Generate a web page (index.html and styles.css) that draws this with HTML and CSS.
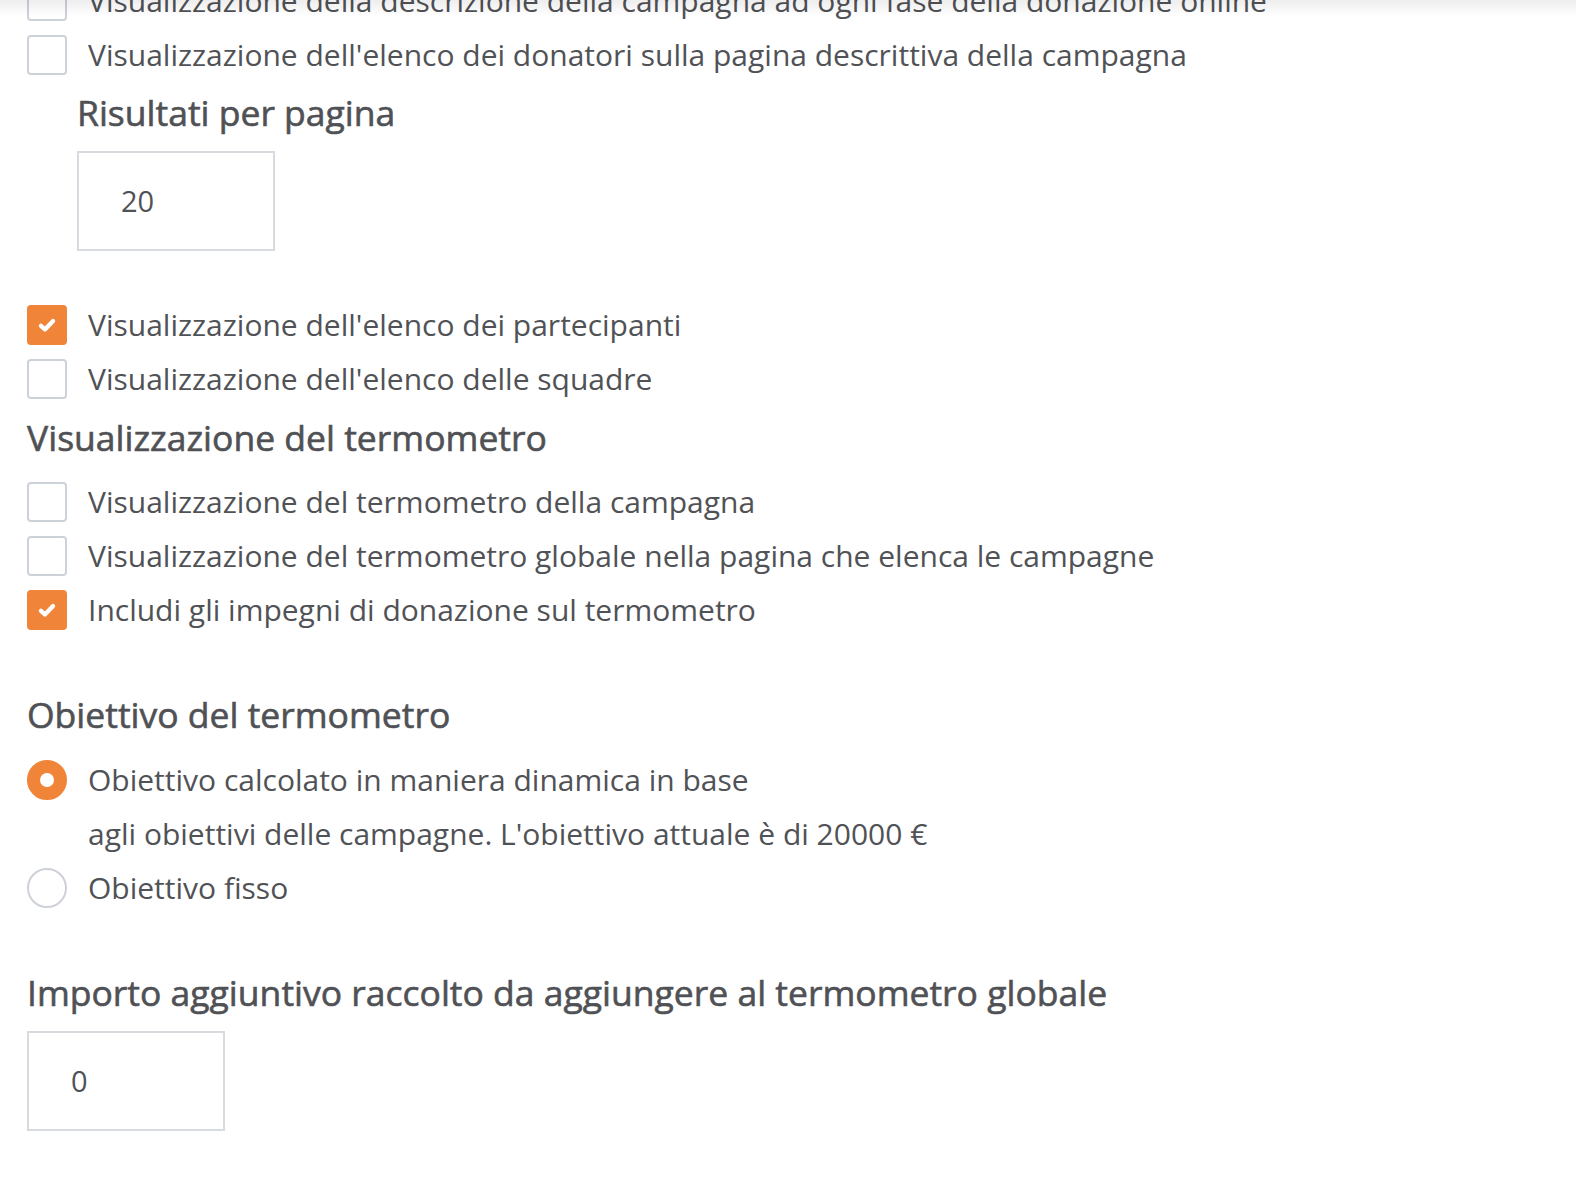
FILE: index.html
```html
<!DOCTYPE html>
<html lang="it">

<head>
    <meta charset="UTF-8">
    <title>Impostazioni campagna</title>
    <link rel="stylesheet" href="styles.css">
</head>

<body>
    <div class="top-shadow"></div>

    <main class="settings">
        <label class="option">
            <span class="box"></span>
            <span class="label-text">Visualizzazione della descrizione della campagna ad ogni fase della donazione online</span>
        </label>
        <label class="option">
            <span class="box"></span>
            <span class="label-text">Visualizzazione dell'elenco dei donatori sulla pagina descrittiva della campagna</span>
        </label>

        <div class="sub-field">
            <h3 class="field-title">Risultati per pagina</h3>
            <div class="text-input">20</div>
        </div>

        <div class="group after-input">
            <label class="option">
                <span class="box checked">
                    <svg viewBox="0 0 16 16" width="22" height="22"><path d="M3.6 8.6l2.9 2.7 5.9-6.2" fill="none" stroke="#fff" stroke-width="3.1" stroke-linecap="round" stroke-linejoin="round"/></svg>
                </span>
                <span class="label-text">Visualizzazione dell'elenco dei partecipanti</span>
            </label>
            <label class="option">
                <span class="box"></span>
                <span class="label-text">Visualizzazione dell'elenco delle squadre</span>
            </label>
        </div>

        <h3 class="section-title">Visualizzazione del termometro</h3>
        <div class="group">
            <label class="option">
                <span class="box"></span>
                <span class="label-text">Visualizzazione del termometro della campagna</span>
            </label>
            <label class="option">
                <span class="box"></span>
                <span class="label-text">Visualizzazione del termometro globale nella pagina che elenca le campagne</span>
            </label>
            <label class="option">
                <span class="box checked">
                    <svg viewBox="0 0 16 16" width="22" height="22"><path d="M3.6 8.6l2.9 2.7 5.9-6.2" fill="none" stroke="#fff" stroke-width="3.1" stroke-linecap="round" stroke-linejoin="round"/></svg>
                </span>
                <span class="label-text">Includi gli impegni di donazione sul termometro</span>
            </label>
        </div>

        <h3 class="section-title spaced">Obiettivo del termometro</h3>
        <div class="group radios">
            <label class="option">
                <span class="radio selected"></span>
                <span class="label-text">Obiettivo calcolato in maniera dinamica in base<br>agli obiettivi delle campagne. L'obiettivo attuale è di 20000 €</span>
            </label>
            <label class="option">
                <span class="radio"></span>
                <span class="label-text">Obiettivo fisso</span>
            </label>
        </div>

        <h3 class="section-title spaced">Importo aggiuntivo raccolto da aggiungere al termometro globale</h3>
        <div class="text-input">0</div>
    </main>
</body>

</html>
```

FILE: styles.css
```css
body {
    margin: 0;
    background-color: #fff;
    font-family: "Open Sans", Lato, sans-serif;
    color: #505256;
    overflow: hidden;
}

.top-shadow {
    position: fixed;
    top: 0;
    left: 0;
    right: 0;
    height: 16px;
    background: linear-gradient(to bottom, rgba(0, 0, 0, 0.07), rgba(0, 0, 0, 0));
}

.settings {
    margin-top: -26px;
    padding-left: 27px;
}

.option {
    display: flex;
    align-items: flex-start;
    gap: 21px;
    font-size: 30px;
    line-height: 54px;
}

.label-text {
    white-space: nowrap;
}

.box,
.radio {
    flex: none;
    width: 40px;
    height: 40px;
    margin-top: 7px;
    box-sizing: border-box;
    border: 2px solid #cdd1d8;
    display: flex;
    align-items: center;
    justify-content: center;
}

.box {
    border-radius: 4px;
}

.box.checked {
    background-color: #f0853a;
    border-color: #f0853a;
}

.radio {
    border-radius: 50%;
}

.radio.selected {
    background-color: #f0853a;
    border-color: #f0853a;
}

.radio.selected::after {
    content: "";
    width: 14px;
    height: 14px;
    border-radius: 50%;
    background-color: #fff;
}

.sub-field {
    padding-left: 50px;
    margin-top: 3px;
}

.field-title,
.section-title {
    margin: 0;
    font-size: 35.5px;
    line-height: 54px;
    font-weight: 400;
    -webkit-text-stroke: 0.6px currentColor;
    color: #4f5155;
}

.field-title {
    margin-bottom: 12px;
}

.text-input {
    width: 198px;
    height: 100px;
    box-sizing: border-box;
    border: 2px solid #d7dbe0;
    padding-left: 42px;
    font-size: 29px;
    line-height: 96px;
}

.group {
    margin-top: 11px;
}

.group.after-input {
    margin-top: 47px;
}

.group.radios {
    margin-top: 12px;
}

.group + .section-title {
    margin-top: 4px;
}

.section-title.spaced {
    margin-top: 50px;
}

.section-title + .text-input {
    margin-top: 12px;
}
```
